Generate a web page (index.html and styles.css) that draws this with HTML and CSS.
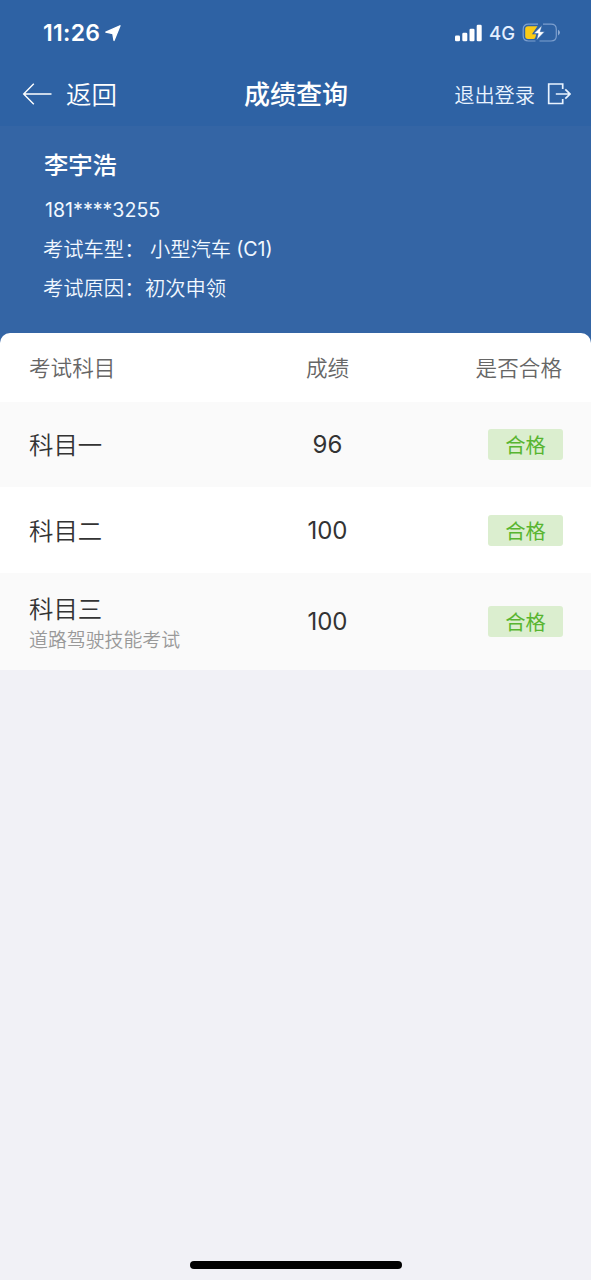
FILE: index.html
```html
<!DOCTYPE html>
<html lang="zh-CN">
<head>
<meta charset="utf-8">
<title>成绩查询</title>
<link rel="stylesheet" href="styles.css">
</head>
<body>
<div class="screen">
  <header class="top">
    <div class="status">
      <div class="status-left">
        <span class="time">11:26</span>
        <svg class="location" width="16" height="17" viewBox="0 0 16 17"><path d="M15 .8 9 15.5 7.8 8.6.8 7.2Z" fill="#fff" stroke="#fff" stroke-width="1.3" stroke-linejoin="round"/></svg>
      </div>
      <div class="status-right">
        <svg width="28" height="18" viewBox="0 0 28 18" fill="#fff"><rect x="0" y="11.5" width="5" height="5.7" rx="1.3"/><rect x="7.3" y="8.7" width="5" height="8.5" rx="1.3"/><rect x="14.5" y="4.7" width="5" height="12.5" rx="1.3"/><rect x="21.7" y=".7" width="5" height="16.5" rx="1.3"/></svg>
        <span class="network">4G</span>
        <svg class="battery" width="39" height="20" viewBox="0 0 39 20"><path d="M16 1.2H6.5Q1.2 1.2 1.2 6.2V13Q1.2 18 6.5 18H13.5M21 1.2H29Q34.3 1.2 34.3 6.2V13Q34.3 18 29 18H17.5" fill="none" stroke="#7d9fce" stroke-width="1.2"/><path d="M36 6.8Q38 7.8 38 9.6T36 12.4Z" fill="#8ba9d2"/><path d="M15.5 3.3H6Q3.2 3.3 3.2 6V13.2Q3.2 15.9 6 15.9H11.5Q13.2 15.9 13.5 14L14.2 11.3H9.9Z" fill="#facb16"/><path d="M20 2.5 11.8 10.6H16.2L14.6 17 22.6 8.7H18.2Z" fill="#fff" stroke="#2e62a4" stroke-width=".5"/></svg>
      </div>
    </div>
    <nav class="nav">
      <div class="back">
        <svg width="30" height="22" viewBox="0 0 30 22" fill="none" stroke="#fff" stroke-width="1.4"><path d="M11.8.8 1.7 11 11.8 21.2M1.7 11H29.5"/></svg>
        <span>返回</span>
      </div>
      <h1 class="title">成绩查询</h1>
      <div class="logout">
        <span>退出登录</span>
        <svg width="24" height="22" viewBox="0 0 24 22" fill="none" stroke="#e9f3ff" stroke-width="1.7"><path d="M15.7 6V1H1.7V20.5H15.7V16M8.8 11H22.4M18.3 6.3 23 11 18.3 15.7"/></svg>
      </div>
    </nav>
  </header>
  <section class="profile">
    <h2 class="name">李宇浩</h2>
    <p class="phone">181****3255</p>
    <p class="line"><span class="label">考试车型：</span><span class="vehicle">小型汽车</span><span class="code">(C1)</span></p>
    <p class="line"><span class="label">考试原因：</span><span>初次申领</span></p>
  </section>
  <main class="card">
    <div class="row head"><span>考试科目</span><span class="score">成绩</span><span class="result">是否合格</span></div>
    <div class="row shaded first"><span class="subject">科目一</span><span class="score">96</span><span class="result"><b class="badge">合格</b></span></div>
    <div class="row"><span class="subject">科目二</span><span class="score">100</span><span class="result"><b class="badge">合格</b></span></div>
    <div class="row shaded tall"><div class="stack"><span class="subject">科目三</span><span class="detail">道路驾驶技能考试</span></div><span class="score">100</span><span class="result"><b class="badge">合格</b></span></div>
  </main>
  <footer class="home"><div class="bar"></div></footer>
</div>
</body>
</html>
```
FILE: styles.css
```css
* { box-sizing: border-box; }
body { margin: 0; background: #fff; font-family: "Noto Sans CJK SC", sans-serif; font-weight: 350; }
h1, h2, p { margin: 0; }
svg { display: block; flex: none; }
.screen { width: 591px; height: 1280px; display: flex; flex-direction: column; background: #f1f1f6; overflow: hidden; }

.top { height: 126px; flex: none; background: #2e62a4; color: #fff; }
.status { height: 64px; padding: 2px 30px 0 43px; display: flex; justify-content: space-between; align-items: center; font-family: Inter, sans-serif; }
.status-left, .status-right { display: flex; align-items: center; }
.time { font-size: 23px; font-weight: 600; line-height: 30px; letter-spacing: .3px; }
.location { margin-left: 5px; }
.network { margin-left: 6px; margin-right: 7px; font-size: 18.5px; font-weight: 500; color: #e4efff; line-height: 26px; }
.nav { height: 62px; padding: 0 20px 2px 22px; display: grid; grid-template-columns: 1fr auto 1fr; align-items: center; }
.back { display: flex; align-items: center; gap: 14px; font-size: 25.5px; line-height: 36px; }
.back span, .title { padding-bottom: 2px; }
.title { font-size: 26px; font-weight: 500; line-height: 36px; margin-left: -1px; }
.logout { display: flex; align-items: center; justify-content: flex-end; gap: 12px; font-size: 20.2px; line-height: 30px; color: #e9f3ff; }
.logout span { padding-top: 1px; }

.profile { height: 217px; flex: none; padding: 20px 43px 0; background: #3465a5; color: #f1f8ff; }
.name { font-size: 24.3px; line-height: 36px; font-weight: 500; color: #fff; padding-left: 1px; }
.phone { margin-top: 9px; padding-left: 2px; font: 400 19.6px/38px Inter, sans-serif; }
.line { display: flex; height: 38.5px; font-size: 20.3px; line-height: 38px; }
.label { width: 102px; }
.vehicle { margin-left: 5px; }
.code { margin-left: 5px; padding-top: 1px; font-family: Inter, sans-serif; font-weight: 400; font-size: 19.6px; }

.card { margin-top: -10px; background: #fff; border-radius: 10px 10px 0 0; overflow: hidden; flex: none; }
.row { height: 86px; padding: 0 29px; display: grid; grid-template-columns: 200px 197px 1fr; align-items: center; color: #333; }
.head { height: 69px; font-size: 21.6px; line-height: 30px; color: #666; padding-bottom: 1px; }
.shaded { background: #fafafa; }
.first { height: 85px; }
.tall { height: 97px; }
.subject { font-size: 24.4px; line-height: 32px; padding-bottom: 1px; }
.score { text-align: center; }
.row:not(.head) .score { font: 400 24px/32px Inter, sans-serif; padding-top: 1px; }
.result { display: flex; justify-content: flex-end; white-space: nowrap; }
.badge { width: 75px; height: 31px; margin-right: -1px; border-radius: 3px; background: #dbeecf; color: #58b530; font-size: 20.3px; font-weight: 400; line-height: 30px; text-align: center; }
.stack { display: flex; flex-direction: column; padding-top: 2px; }
.stack .subject { padding-bottom: 0; }
.detail { font-size: 18.9px; line-height: 30px; color: #999; }

.home { margin-top: auto; height: 20px; padding-left: 190px; }
.bar { width: 212px; height: 8px; border-radius: 4px; background: #000; margin-top: 1px; }
```
